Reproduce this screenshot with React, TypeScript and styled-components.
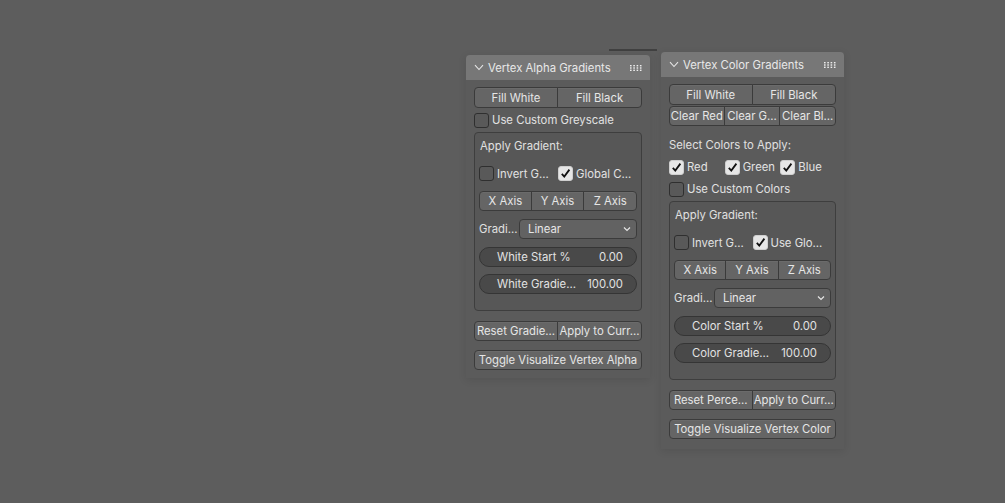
import React from "react";
import styled, { createGlobalStyle } from "styled-components";

const FS = "11.3px";

const GlobalStyle = createGlobalStyle`
  html, body { margin: 0; padding: 0; }
  body {
    background: #5d5d5d;
    font-family: Inter, "Noto Sans", "DejaVu Sans", sans-serif;
    color: #e4e4e4;
    -webkit-font-smoothing: antialiased;
  }
  * { box-sizing: border-box; }
`;

const Canvas = styled.div`
  position: relative;
  width: 1005px;
  height: 503px;
  overflow: hidden;
  background: #5d5d5d;
`;

const Artifact = styled.div`
  position: absolute;
  left: 609px;
  top: 49px;
  width: 48px;
  height: 2px;
  background: #404040;
`;

const Panel = styled.div<{ $left: number; $top: number; $width: number }>`
  position: absolute;
  left: ${(p) => p.$left}px;
  top: ${(p) => p.$top}px;
  width: ${(p) => p.$width}px;
  display: flex;
  flex-direction: column;
  box-shadow: 0 2px 8px rgba(0, 0, 0, 0.1);
`;

const Header = styled.div`
  height: 25px;
  display: flex;
  align-items: center;
  padding: 0 7px 0 8px;
  background: #777777;
  border-radius: 4px 4px 0 0;
  font-size: ${FS};
  color: #e8e8e8;
  gap: 4px;
`;

const HeaderTitle = styled.span`
  flex: 1;
  white-space: nowrap;
`;

const Body = styled.div<{ $pb: number }>`
  display: flex;
  flex-direction: column;
  padding: 7px 8px ${(p) => p.$pb}px 8px;
  background: #5b5b5b;
`;

const ButtonRow = styled.div<{ $cols: number; $mt?: number; $h?: number }>`
  display: grid;
  grid-template-columns: repeat(${(p) => p.$cols}, 1fr);
  height: ${(p) => p.$h ?? 20}px;
  margin-top: ${(p) => p.$mt ?? 0}px;
`;

const Btn = styled.div`
  display: flex;
  align-items: center;
  justify-content: center;
  background: #656565;
  border: 1px solid #3b3b3b;
  margin-left: -1px;
  font-size: ${FS};
  color: #e6e6e6;
  white-space: nowrap;
  overflow: hidden;
  box-shadow: inset 0 1px 0 rgba(255, 255, 255, 0.04);
  &:first-child {
    margin-left: 0;
    border-radius: 4px 0 0 4px;
  }
  &:last-child {
    border-radius: 0 4px 4px 0;
  }
  &:only-child {
    border-radius: 4px;
  }
`;

const CheckRow = styled.div<{ $cols: number; $mt?: number }>`
  display: grid;
  grid-template-columns: repeat(${(p) => p.$cols}, 1fr);
  height: 20px;
  margin-top: ${(p) => p.$mt ?? 0}px;
  align-items: center;
`;

const CheckItem = styled.div`
  display: flex;
  align-items: center;
  gap: 3px;
  font-size: ${FS};
  color: #e2e2e2;
  white-space: nowrap;
`;

const Box = styled.div<{ $on: boolean }>`
  width: 15px;
  height: 15px;
  flex: none;
  border-radius: 3px;
  border: 1px solid ${(p) => (p.$on ? "#cfcfcf" : "#2f2f2f")};
  background: ${(p) => (p.$on ? "#e6e6e6" : "#595959")};
  display: flex;
  align-items: center;
  justify-content: center;
`;

const Label = styled.div<{ $mt?: number }>`
  height: 20px;
  display: flex;
  align-items: center;
  font-size: ${FS};
  color: #e0e0e0;
  margin-top: ${(p) => p.$mt ?? 0}px;
  white-space: nowrap;
`;

const SubBox = styled.div`
  margin-top: 2px;
  display: flex;
  flex-direction: column;
  gap: 7.7px;
  padding: 3px 4px 16px 4px;
  background: #575757;
  border: 1px solid #3e3e3e;
  border-radius: 4px;
`;

const BoxLabel = styled.div`
  height: 20px;
  display: flex;
  align-items: center;
  padding-left: 1px;
  font-size: ${FS};
  color: #e0e0e0;
`;

const PropRow = styled.div`
  display: flex;
  height: 20px;
  align-items: center;
  gap: 2px;
`;

const PropLabel = styled.div`
  width: 38px;
  font-size: ${FS};
  color: #e0e0e0;
  white-space: nowrap;
`;

const Dropdown = styled.div`
  flex: 1;
  height: 20px;
  display: flex;
  align-items: center;
  justify-content: space-between;
  padding: 0 5px 0 8px;
  background: #626262;
  border: 1px solid #3b3b3b;
  border-radius: 4px;
  font-size: ${FS};
  color: #e6e6e6;
`;

const Slider = styled.div`
  height: 20px;
  display: flex;
  align-items: center;
  justify-content: space-between;
  padding: 0 13px 0 17px;
  background: #494949;
  border: 1px solid #353535;
  border-radius: 10px;
  font-size: ${FS};
  color: #e2e2e2;
  white-space: nowrap;
`;

const Chevron = () => (
  <svg width="10" height="7" viewBox="0 0 10 7">
    <path d="M1 1.2 L5 5.5 L9 1.2" fill="none" stroke="#e6e6e6" strokeWidth="1.1" />
  </svg>
);

const SmallChevron = () => (
  <svg width="8" height="6" viewBox="0 0 8 6">
    <path d="M1 1.5 L4 4.5 L7 1.5" fill="none" stroke="#e6e6e6" strokeWidth="1.2" />
  </svg>
);

const Grip = () => (
  <svg width="14" height="8" viewBox="0 0 14 8">
    {[0, 1, 2, 3].map((c) =>
      [0, 1, 2].map((r) => (
        <rect key={`${c}-${r}`} x={1 + c * 3.3} y={1 + r * 2.3} width="1.6" height="1.4" fill="#eeeeee" />
      ))
    )}
  </svg>
);

const Check = ({ on }: { on: boolean }) => (
  <Box $on={on}>
    {on && (
      <svg width="11" height="11" viewBox="0 0 11 11">
        <path d="M1.8 5.8 L4.3 8.6 L9.4 1.6" fill="none" stroke="#111" strokeWidth="1.8" />
      </svg>
    )}
  </Box>
);

const CI = ({ on, label }: { on: boolean; label: string }) => (
  <CheckItem>
    <Check on={on} />
    <span>{label}</span>
  </CheckItem>
);

const GradientBox = ({
  b,
  start,
  grad,
}: {
  b: string;
  start: string;
  grad: string;
}) => (
  <SubBox>
    <BoxLabel>Apply Gradient:</BoxLabel>
    <CheckRow $cols={2}>
      <CI on={false} label="Invert G..." />
      <CI on={true} label={b} />
    </CheckRow>
    <ButtonRow $cols={3}>
      <Btn>X Axis</Btn>
      <Btn>Y Axis</Btn>
      <Btn>Z Axis</Btn>
    </ButtonRow>
    <PropRow>
      <PropLabel>Gradi...</PropLabel>
      <Dropdown>
        <span>Linear</span>
        <SmallChevron />
      </Dropdown>
    </PropRow>
    <Slider>
      <span>{start}</span>
      <span>0.00</span>
    </Slider>
    <Slider>
      <span>{grad}</span>
      <span>100.00</span>
    </Slider>
  </SubBox>
);

export default function App() {
  return (
    <>
      <GlobalStyle />
      <Canvas>
        <Artifact />
        <Panel $left={466} $top={55} $width={184}>
          <Header>
            <Chevron />
            <HeaderTitle>Vertex Alpha Gradients</HeaderTitle>
            <Grip />
          </Header>
          <Body $pb={8}>
            <ButtonRow $cols={2} $h={21}>
              <Btn>Fill White</Btn>
              <Btn>Fill Black</Btn>
            </ButtonRow>
            <CheckRow $cols={1} $mt={2}>
              <CI on={false} label="Use Custom Greyscale" />
            </CheckRow>
            <GradientBox b="Global C..." start="White Start %" grad="White Gradie..." />
            <ButtonRow $cols={2} $mt={10}>
              <Btn>Reset Gradie...</Btn>
              <Btn>Apply to Curr...</Btn>
            </ButtonRow>
            <ButtonRow $cols={1} $mt={9}>
              <Btn>Toggle Visualize Vertex Alpha</Btn>
            </ButtonRow>
          </Body>
        </Panel>

        <Panel $left={661} $top={52} $width={183}>
          <Header>
            <Chevron />
            <HeaderTitle>Vertex Color Gradients</HeaderTitle>
            <Grip />
          </Header>
          <Body $pb={10}>
            <ButtonRow $cols={2} $h={21}>
              <Btn>Fill White</Btn>
              <Btn>Fill Black</Btn>
            </ButtonRow>
            <ButtonRow $cols={3} $mt={1}>
              <Btn>Clear Red</Btn>
              <Btn>Clear G...</Btn>
              <Btn>Clear Bl...</Btn>
            </ButtonRow>
            <Label $mt={9}>Select Colors to Apply:</Label>
            <CheckRow $cols={3} $mt={2}>
              <CI on={true} label="Red" />
              <CI on={true} label="Green" />
              <CI on={true} label="Blue" />
            </CheckRow>
            <CheckRow $cols={1} $mt={2}>
              <CI on={false} label="Use Custom Colors" />
            </CheckRow>
            <GradientBox b="Use Glo..." start="Color Start %" grad="Color Gradie..." />
            <ButtonRow $cols={2} $mt={10}>
              <Btn>Reset Perce...</Btn>
              <Btn>Apply to Curr...</Btn>
            </ButtonRow>
            <ButtonRow $cols={1} $mt={9}>
              <Btn>Toggle Visualize Vertex Color</Btn>
            </ButtonRow>
          </Body>
        </Panel>
      </Canvas>
    </>
  );
}
